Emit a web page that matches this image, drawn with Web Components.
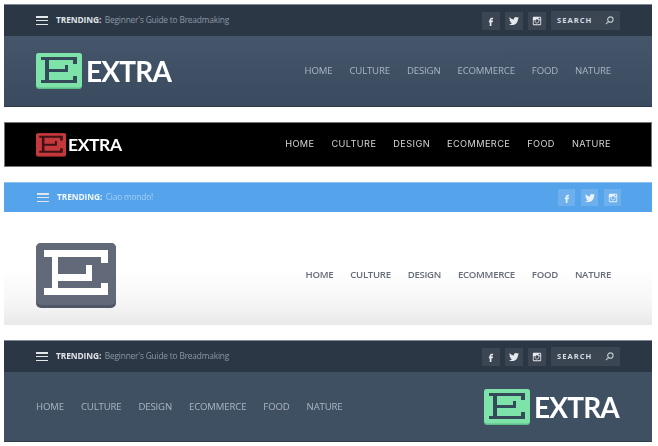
<!DOCTYPE html>
<html lang="en">
<head>
  <meta charset="UTF-8">
  <title>Extra header variations</title>
  <style>
    body { margin: 0; background: #fff; font-family: "Open Sans", "Liberation Sans", sans-serif; }
    main { width: 648px; margin: 0; padding: 4px 6px 0 4px; display: flex; flex-direction: column; gap: 15px; filter: blur(0.35px); }
  </style>
</head>
<body>
  <main>
    <ex-panel>
      <ex-topbar text="Beginner's Guide to Breadmaking" search></ex-topbar>
      <ex-masthead>
        <ex-logo></ex-logo>
        <ex-nav></ex-nav>
      </ex-masthead>
    </ex-panel>

    <ex-panel>
      <ex-masthead variant="black">
        <ex-logo variant="red"></ex-logo>
        <ex-nav variant="wide"></ex-nav>
      </ex-masthead>
    </ex-panel>

    <ex-panel>
      <ex-topbar variant="blue" text="Ciao mondo!"></ex-topbar>
      <ex-masthead variant="light">
        <ex-logo variant="slate"></ex-logo>
        <ex-nav variant="dark"></ex-nav>
      </ex-masthead>
    </ex-panel>

    <ex-panel>
      <ex-topbar text="Beginner's Guide to Breadmaking" search></ex-topbar>
      <ex-masthead variant="flip">
        <ex-nav></ex-nav>
        <ex-logo></ex-logo>
      </ex-masthead>
    </ex-panel>
  </main>

  <script>
    const ICONS = {
      f: '<path d="M14 8h3V4h-3c-2.8 0-5 2.2-5 5v2H7v4h2v9h4v-9h3l1-4h-4V9c0-.6.4-1 1-1z"/>',
      t: '<path d="M23.953 4.57a10 10 0 01-2.825.775 4.958 4.958 0 002.163-2.723c-.951.555-2.005.959-3.127 1.184a4.92 4.92 0 00-8.384 4.482C7.69 8.095 4.067 6.13 1.64 3.162a4.822 4.822 0 00-.666 2.475c0 1.71.87 3.213 2.188 4.096a4.904 4.904 0 01-2.228-.616v.06a4.923 4.923 0 003.946 4.827 4.996 4.996 0 01-2.212.085 4.936 4.936 0 004.604 3.417 9.867 9.867 0 01-6.102 2.105c-.39 0-.779-.023-1.17-.067a13.995 13.995 0 007.557 2.209c9.053 0 13.998-7.496 13.998-13.985 0-.21 0-.42-.015-.63A9.935 9.935 0 0024 4.59z"/>',
      i: '<path fill-rule="evenodd" d="M4 2h16a2 2 0 012 2v16a2 2 0 01-2 2H4a2 2 0 01-2-2V4a2 2 0 012-2zm12 2v4h4V4h-4zM4 10v10h16V10h-3a5.5 5.5 0 11-10 0H4zm8-2a4 4 0 100 8 4 4 0 000-8z"/>'
    };

    // the E is a slab letter: top bar, bottom bar, stem, middle bar and their serifs
    const bars = list => list.map(([x, y, w, h]) => `M${x} ${y}h${w}v${h}h${-w}z`).join('');
    const BIG_E = bars([[8, 7, 64, 7], [65, 14, 7, 6], [16, 14, 6, 31], [8, 45, 64, 7], [65, 40, 7, 5], [22, 31, 34, 7], [50, 22, 6, 9]]);
    const THIN_E = bars([[5, 4, 36, 3], [37, 7, 4, 4], [9, 7, 4, 20], [5, 27, 36, 3], [37, 23, 4, 4], [13, 16, 19, 3], [29, 12, 3, 4]]);

    class ExPanel extends HTMLElement {
      constructor() {
        super();
        this.attachShadow({ mode: 'open' });
        this.shadowRoot.innerHTML = `
          <style>:host { display: block; }</style>
          <slot></slot>`;
      }
    }

    class ExLogo extends HTMLElement {
      constructor() {
        super();
        this.attachShadow({ mode: 'open' });
      }

      connectedCallback() {
        const variant = this.getAttribute('variant') || 'mint';
        const mark = variant === 'slate'
          ? `<svg width="80" height="65" viewBox="0 0 80 65"><rect width="80" height="65" rx="5" fill="#4f5666"/><rect width="80" height="62" rx="5" fill="#626978"/><path d="${BIG_E}" fill="#fff"/></svg>`
          : `<svg class="mark" viewBox="0 0 46 36"><rect width="46" height="36" rx="3" fill="var(--edge)"/><rect width="46" height="34.5" rx="3" fill="var(--face)"/><path d="${THIN_E}" fill="var(--ink)"/></svg>`;
        this.shadowRoot.innerHTML = `
          <style>
            :host { display: flex; align-items: center; gap: 4px; --face: #7ee3a8; --edge: #5cbd88; --ink: #34495a; }
            :host([variant="red"]) { --face: #c5393d; --edge: #a52c30; --ink: #3d1215; gap: 2px; }
            .mark { width: 46px; height: 36px; display: block; }
            :host([variant="red"]) .mark { width: 30px; height: 24px; }
            b { font: 700 28px/1 Lato, "Open Sans", sans-serif; color: #fff; letter-spacing: -0.8px; }
            :host([variant="red"]) b { font-size: 17.5px; letter-spacing: -0.4px; }
          </style>
          ${mark}
          ${variant === 'slate' ? '' : '<b>EXTRA</b>'}`;
      }
    }

    class ExNav extends HTMLElement {
      constructor() {
        super();
        this.attachShadow({ mode: 'open' });
        const items = ['HOME', 'CULTURE', 'DESIGN', 'ECOMMERCE', 'FOOD', 'NATURE'];
        this.shadowRoot.innerHTML = `
          <style>
            :host { display: flex; gap: 17px; font: 400 9.6px/14px "Open Sans", sans-serif; color: #a9b5c3; letter-spacing: -0.15px; }
            :host([variant="wide"]) { font: 400 9.2px/14px Inter, sans-serif; color: #d4d4d4; letter-spacing: 0.4px; margin-top: -1px; }
            :host([variant="dark"]) { color: #666c78; font-weight: 600; letter-spacing: -0.3px; }
            a { color: inherit; text-decoration: none; white-space: nowrap; }
          </style>
          ${items.map(item => `<a href="#">${item}</a>`).join('')}`;
      }
    }

    class ExMasthead extends HTMLElement {
      constructor() {
        super();
        this.attachShadow({ mode: 'open' });
        this.shadowRoot.innerHTML = `
          <style>
            :host { display: flex; align-items: center; justify-content: space-between; height: 71px; box-sizing: border-box;
              padding: 0 41px 0 32px; background: linear-gradient(#46566a, #3b4b5f); border-bottom: 1px solid #2f3a47; }
            :host([variant="black"]) { height: 45px; background: #000; border: 1px solid #777; padding: 0 40px 0 31px; }
            :host([variant="light"]) { height: 113px; padding-top: 13px; background: linear-gradient(#fff 50%, #f6f6f6 80%, #e9e9e9); border: 0; }
            :host([variant="flip"]) { height: 70px; padding-right: 33px; background: #405063; }
          </style>
          <slot></slot>`;
      }
    }

    class ExSocial extends HTMLElement {
      constructor() {
        super();
        this.attachShadow({ mode: 'open' });
        this.shadowRoot.innerHTML = `
          <style>
            :host { display: flex; gap: var(--tile-gap, 5px); }
            span { width: var(--tile-size, 18px); height: var(--tile-size, 18px); display: flex; align-items: center; justify-content: center; background: var(--tile); }
            svg { width: 10px; height: 10px; fill: var(--glyph); }
          </style>
          ${Object.values(ICONS).map(d => `<span><svg viewBox="0 0 24 24">${d}</svg></span>`).join('')}`;
      }
    }

    class ExSearch extends HTMLElement {
      constructor() {
        super();
        this.attachShadow({ mode: 'open' });
        this.shadowRoot.innerHTML = `
          <style>
            :host { display: flex; align-items: center; justify-content: space-between; width: 69px; height: 19px; box-sizing: border-box;
              padding: 0 6px; background: var(--tile); font: 700 7.6px/1 "Open Sans", sans-serif; letter-spacing: 1px; color: #d5dbe2; }
            svg { width: 9px; height: 9px; fill: none; stroke: #c3cbd4; stroke-width: 1.2; }
          </style>
          <span>SEARCH</span>
          <svg viewBox="0 0 10 10"><circle cx="6" cy="4" r="3"/><path d="M3.8 6.2L1 9"/></svg>`;
      }
    }

    class ExTopbar extends HTMLElement {
      constructor() {
        super();
        this.attachShadow({ mode: 'open' });
      }

      connectedCallback() {
        const text = this.getAttribute('text') || '';
        const search = this.hasAttribute('search');
        this.shadowRoot.innerHTML = `
          <style>
            :host { display: flex; align-items: center; height: 32px; box-sizing: border-box; padding: 0 32px; background: #2c3745;
              border-top: 1px solid #7f8892; --tile: rgba(255,255,255,.08); --glyph: #e6eaee; font: 400 8.4px/1 "Open Sans", sans-serif; }
            :host([variant="blue"]) { height: 30px; background: #55a3ea; border-top-color: #8fc1ee; padding-left: 33px; padding-right: 31px;
              --tile: rgba(255,255,255,.14); --glyph: #e8f3fc; --tile-size: 17px; --tile-gap: 6px; }
            .menu { width: 12px; height: 9px; margin-right: 8px; display: flex; flex-direction: column; justify-content: space-between; }
            .menu i { height: 1.5px; background: #e4e7ea; }
            strong { font-weight: 700; color: #dfe3e7; margin-right: 3.5px; letter-spacing: -0.1px; }
            :host([variant="blue"]) strong { color: #f0f7fd; }
            .text { color: #8b97a5; letter-spacing: -0.2px; }
            :host([variant="blue"]) .text { color: #a3cff5; }
            .right { margin-left: auto; display: flex; align-items: center; gap: 5px; }
          </style>
          <span class="menu"><i></i><i></i><i></i></span>
          <strong>TRENDING:</strong>
          <span class="text">${text}</span>
          <span class="right"><ex-social></ex-social>${search ? '<ex-search></ex-search>' : ''}</span>`;
      }
    }

    customElements.define('ex-panel', ExPanel);
    customElements.define('ex-logo', ExLogo);
    customElements.define('ex-nav', ExNav);
    customElements.define('ex-masthead', ExMasthead);
    customElements.define('ex-social', ExSocial);
    customElements.define('ex-search', ExSearch);
    customElements.define('ex-topbar', ExTopbar);
  </script>
</body>
</html>
